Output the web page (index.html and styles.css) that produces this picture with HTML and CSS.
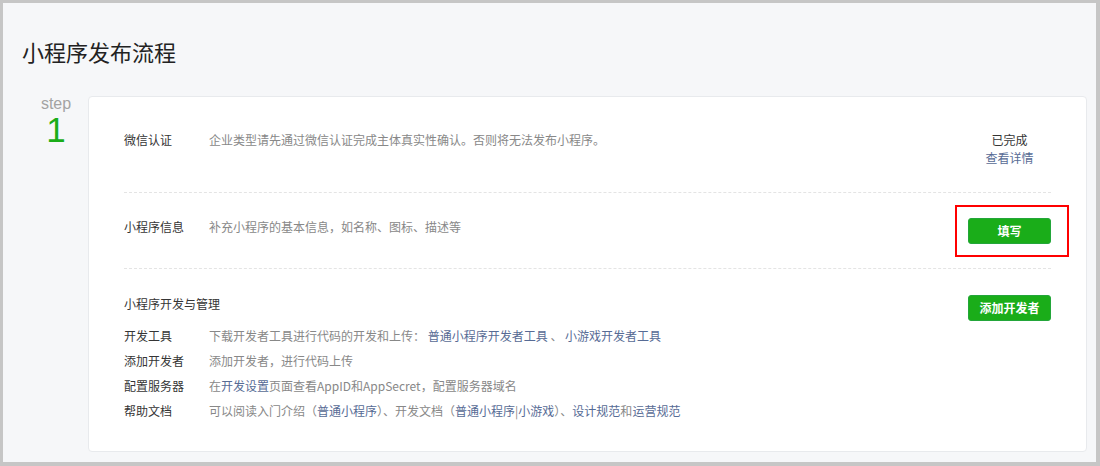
FILE: index.html
```html
<!DOCTYPE html>
<html lang="zh-CN">
<head>
<meta charset="utf-8">
<title>小程序发布流程</title>
<link rel="stylesheet" href="styles.css">
</head>
<body>
<div class="frame">
  <h1 class="title">小程序发布流程</h1>
  <div class="main">
    <div class="step">
      <div class="step-label">step</div>
      <div class="step-num">1</div>
    </div>
    <div class="card">
      <div class="row row-first">
        <div class="label">微信认证</div>
        <div class="desc">企业类型请先通过微信认证完成主体真实性确认。否则将无法发布小程序。</div>
        <div class="action">
          <div class="status">已完成</div>
          <a class="link">查看详情</a>
        </div>
      </div>
      <div class="row row-second">
        <div class="label">小程序信息</div>
        <div class="desc">补充小程序的基本信息，如名称、图标、描述等</div>
        <div class="action">
          <div class="highlight">
            <button class="btn">填写</button>
          </div>
        </div>
      </div>
      <div class="row-third">
        <div class="section-head">
          <div class="section-title">小程序开发与管理</div>
          <button class="btn">添加开发者</button>
        </div>
        <div class="list">
          <div class="item"><div class="label">开发工具</div><div class="desc">下载开发者工具进行代码的开发和上传： <a class="link">普通小程序开发者工具</a> 、 <a class="link">小游戏开发者工具</a></div></div>
          <div class="item"><div class="label">添加开发者</div><div class="desc">添加开发者，进行代码上传</div></div>
          <div class="item"><div class="label">配置服务器</div><div class="desc">在<a class="link">开发设置</a>页面查看AppID和AppSecret，配置服务器域名</div></div>
          <div class="item"><div class="label">帮助文档</div><div class="desc">可以阅读入门介绍（<a class="link">普通小程序</a>）、开发文档（<a class="link">普通小程序</a><span class="sep">|</span><a class="link">小游戏</a>）、<a class="link">设计规范</a>和<a class="link">运营规范</a></div></div>
        </div>
      </div>
    </div>
  </div>
</div>
</body>
</html>
```

FILE: styles.css
```css
* { box-sizing: border-box; }
html, body { margin: 0; padding: 0; }
body {
  font-family: "Noto Sans CJK SC", "Noto Sans", "Liberation Sans", sans-serif;
  font-size: 12px;
  color: #353535;
}
.frame {
  height: 466px;
  border-style: solid;
  border-color: #c6c6c6;
  border-width: 3px 4px 4px 3px;
  background: #f6f7f9;
  padding: 33px 9px 0 19px;
}
.title {
  margin: 0 0 30px 0;
  font-size: 22px;
  line-height: 30px;
  font-weight: normal;
  color: #222;
}
.main {
  display: flex;
  align-items: flex-start;
}
.step {
  width: 66px;
  text-align: center;
  padding-left: 2px;
  font-family: "Liberation Sans", "Noto Sans", sans-serif;
}
.step-label {
  font-size: 16px;
  line-height: 16px;
  color: #a3a3a3;
}
.step-num {
  font-size: 35px;
  line-height: 36px;
  color: #1aad19;
}
.card {
  flex: 1;
  background: #fff;
  border: 1px solid #e8eaed;
  border-radius: 4px;
  padding: 0 35px;
}
.row {
  display: flex;
  align-items: flex-start;
  line-height: 18px;
  border-bottom: 1px dashed #e4e4e4;
}
.row-first { padding: 34px 0 25px; }
.row-second { padding: 25px 0 24px; }
.label {
  width: 85px;
  flex: none;
  color: #353535;
}
.desc {
  flex: 1;
  color: #888;
}
.action {
  width: 83px;
  flex: none;
  text-align: center;
}
.status { color: #353535; }
.link {
  color: #576b95;
  text-decoration: none;
  cursor: pointer;
}
.highlight {
  position: relative;
}
.highlight::after {
  content: "";
  position: absolute;
  left: -13px;
  top: -13px;
  width: 110px;
  height: 48px;
  border: 2px solid #f00;
}
.btn {
  display: block;
  width: 83px;
  height: 26px;
  padding: 0;
  border: 1px solid #23a63a;
  border-radius: 3px;
  background: #1aad19;
  color: #fff;
  font-family: inherit;
  font-size: 12px;
  font-weight: bold;
  line-height: 24px;
  text-align: center;
}
.row-third {
  padding: 26px 0 28px;
}
.section-head {
  display: flex;
  justify-content: space-between;
  align-items: flex-start;
  line-height: 18px;
}
.section-title { color: #353535; }
.list { margin-top: 2px; }
.item {
  display: flex;
  line-height: 25px;
}
.sep { color: #888; }
```
